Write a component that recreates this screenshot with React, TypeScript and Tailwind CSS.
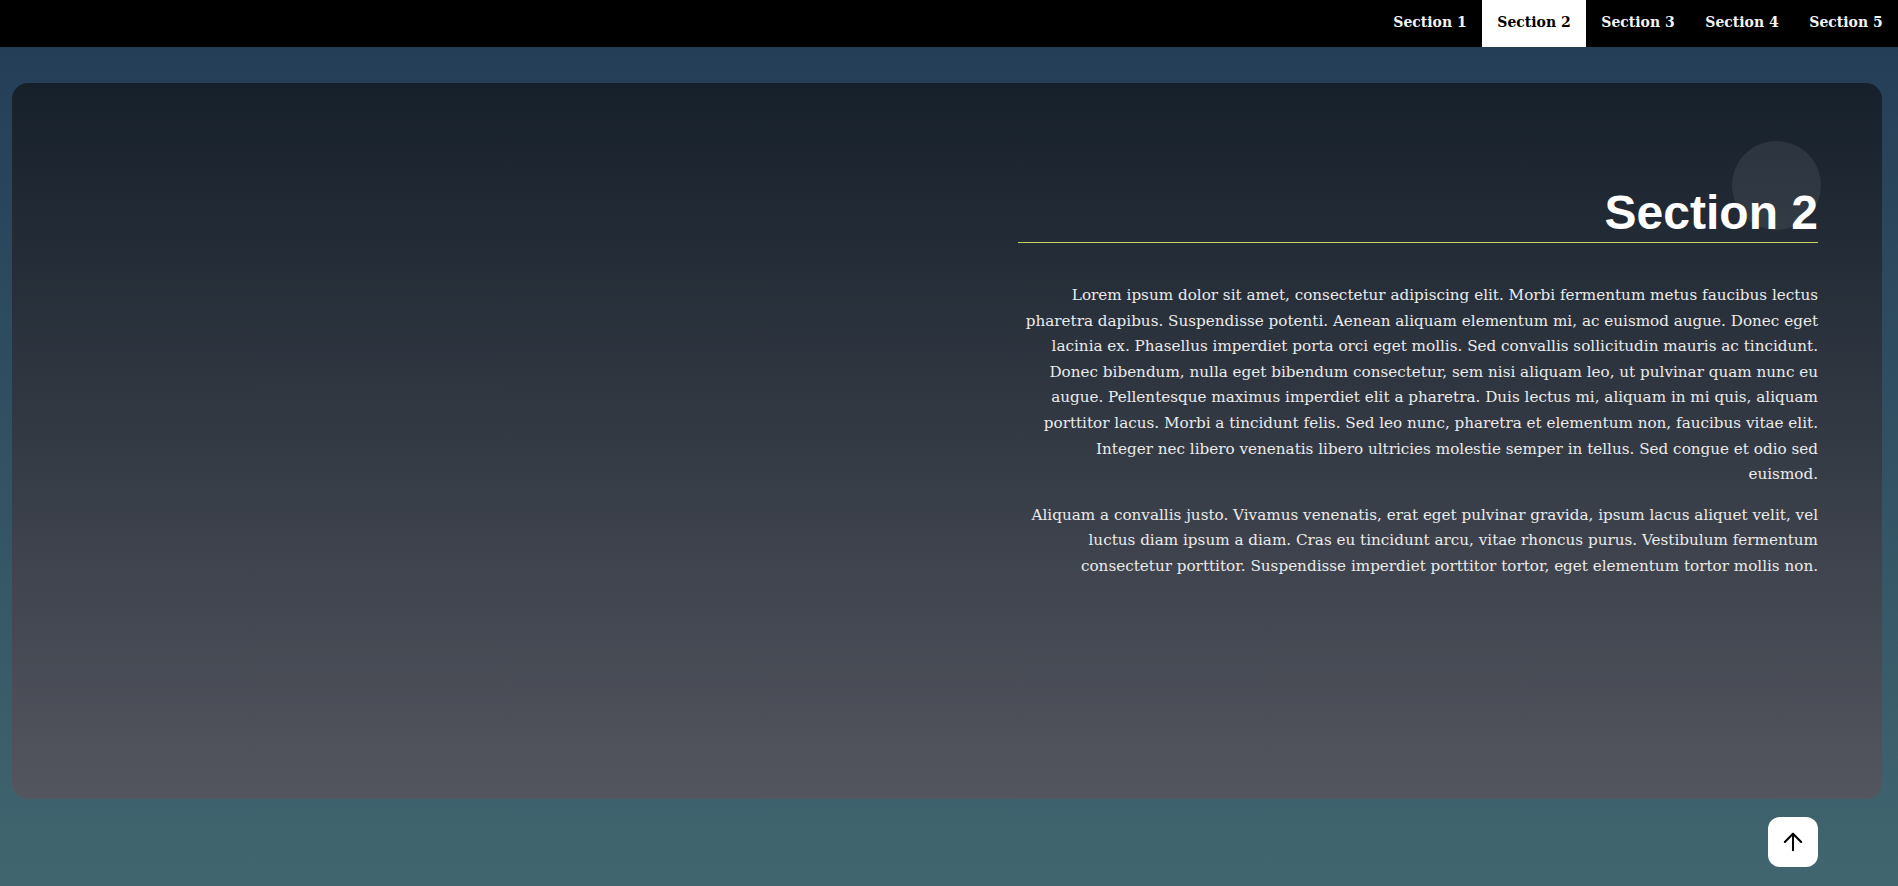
import { Fragment } from "react";
import { ArrowUp } from "lucide-react";

const sections = ["Section 1", "Section 2", "Section 3", "Section 4", "Section 5"];

const para1 = [
  "Lorem ipsum dolor sit amet, consectetur adipiscing elit. Morbi fermentum metus faucibus lectus",
  "pharetra dapibus. Suspendisse potenti. Aenean aliquam elementum mi, ac euismod augue. Donec eget",
  "lacinia ex. Phasellus imperdiet porta orci eget mollis. Sed convallis sollicitudin mauris ac tincidunt.",
  "Donec bibendum, nulla eget bibendum consectetur, sem nisi aliquam leo, ut pulvinar quam nunc eu",
  "augue. Pellentesque maximus imperdiet elit a pharetra. Duis lectus mi, aliquam in mi quis, aliquam",
  "porttitor lacus. Morbi a tincidunt felis. Sed leo nunc, pharetra et elementum non, faucibus vitae elit.",
  "Integer nec libero venenatis libero ultricies molestie semper in tellus. Sed congue et odio sed",
  "euismod.",
];

const para2 = [
  "Aliquam a convallis justo. Vivamus venenatis, erat eget pulvinar gravida, ipsum lacus aliquet velit, vel",
  "luctus diam ipsum a diam. Cras eu tincidunt arcu, vitae rhoncus purus. Vestibulum fermentum",
  "consectetur porttitor. Suspendisse imperdiet porttitor tortor, eget elementum tortor mollis non.",
];

const Lines = ({ lines }: { lines: string[] }) => (
  <>
    {lines.map((l, i) => (
      <Fragment key={i}>
        {i > 0 && <br />}
        {l}
      </Fragment>
    ))}
  </>
);

const App = () => {
  return (
    <div className="min-h-screen bg-linear-to-b from-[#233c56] to-[#41666f] font-['DejaVu_Serif',serif]">
      <nav className="flex h-[47px] justify-end bg-black">
        {sections.map((s) => (
          <a
            key={s}
            href="#"
            className={
              s === "Section 2"
                ? "flex w-[104px] items-center justify-center bg-white pb-[3px] text-[14px] font-bold text-black"
                : "flex w-[104px] items-center justify-center pb-[3px] text-[14px] font-bold text-[#f2f2f2]"
            }
          >
            {s}
          </a>
        ))}
      </nav>

      <section className="ml-3 mr-4 mt-9 h-[716px] rounded-2xl bg-linear-to-b from-[#16202b] to-[#54565f] pt-[106px]">
        <div className="ml-auto mr-16 w-[800px]">
          <div className="relative border-b border-[#c9d35b] pb-[5px] text-right">
            <span className="absolute right-[-3px] top-[-48px] h-[89px] w-[89px] rounded-full bg-[#ffffff14]" />
            <h2 className="relative font-['Liberation_Sans',Arial,sans-serif] text-[48px] font-bold leading-none text-white">
              Section 2
            </h2>
          </div>
          <div className="mt-10 text-right text-[15.2px] leading-[25.6px] text-[#ebebeb]">
            <p className="whitespace-nowrap">
              <Lines lines={para1} />
            </p>
            <p className="mt-[15px] whitespace-nowrap">
              <Lines lines={para2} />
            </p>
          </div>
        </div>
      </section>

      <div className="flex justify-end pr-20 pt-[18px]">
        <button className="flex h-[50px] w-[50px] items-center justify-center rounded-xl bg-white text-black">
          <ArrowUp size={28} strokeWidth={1.75} />
        </button>
      </div>
    </div>
  );
};

export default App;
